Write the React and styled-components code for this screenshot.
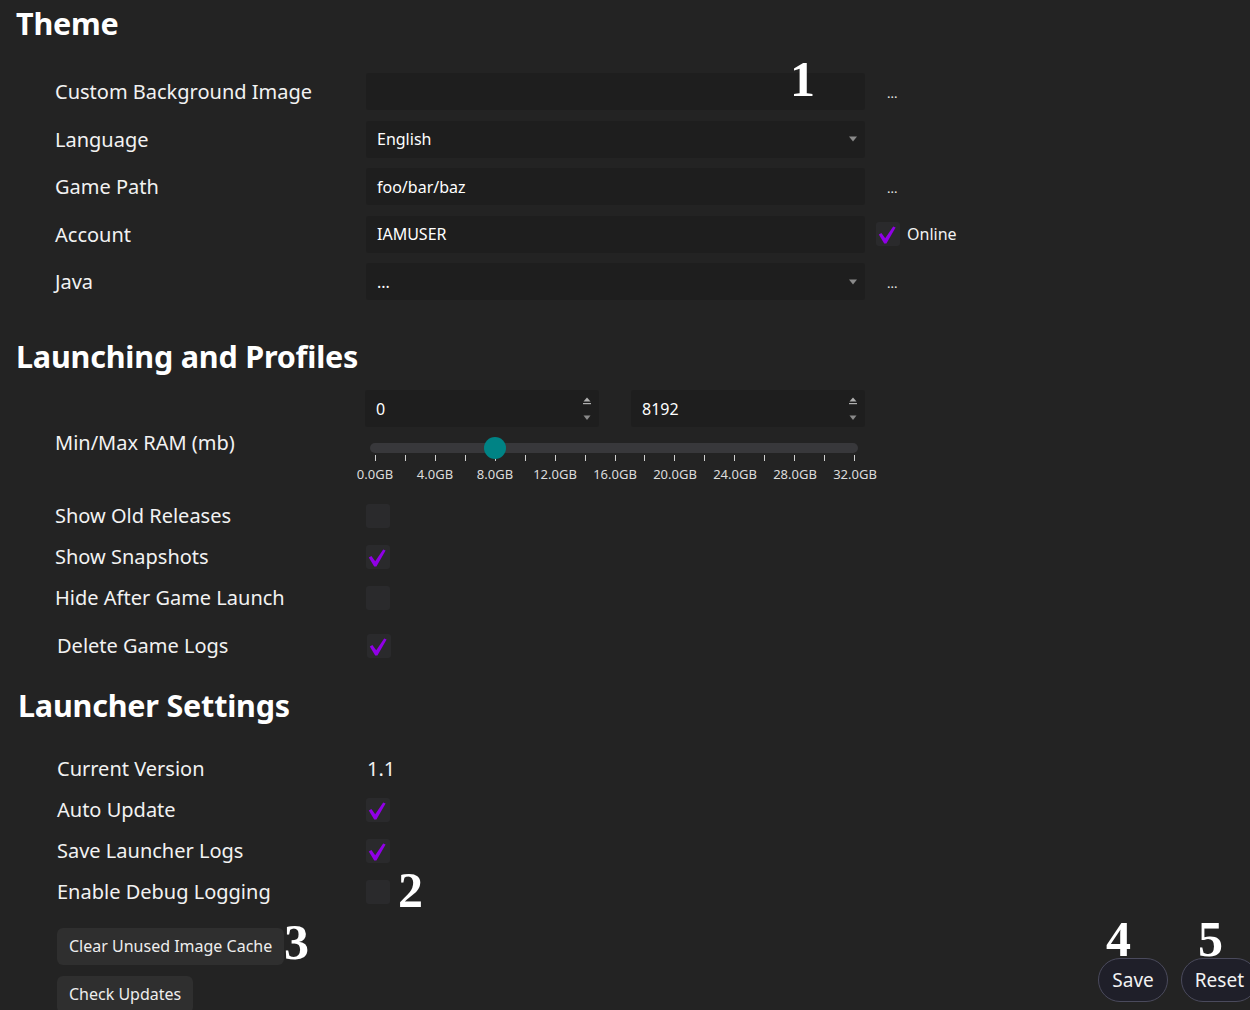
import styled, { createGlobalStyle } from 'styled-components';

const GlobalStyle = createGlobalStyle`
    html, body {
        margin: 0;
        padding: 0;
        background: #232323;
        overflow: hidden;
    }
    body {
        font-family: "Noto Sans", "Open Sans", sans-serif;
        color: #f4f4f4;
    }
`;

const RAM_MAX = 32768;
const ramMin = 0;
const ramMax = 8192;

const themeRows = [
    { label: 'Custom Background Image', kind: 'input', value: '', extra: 'dots' },
    { label: 'Language', kind: 'select', value: 'English' },
    { label: 'Game Path', kind: 'input', value: 'foo/bar/baz', extra: 'dots' },
    { label: 'Account', kind: 'input', value: 'IAMUSER', extra: 'online' },
    { label: 'Java', kind: 'select', value: '...', extra: 'dots' },
];

const profileChecks = [
    { label: 'Show Old Releases', checked: false },
    { label: 'Show Snapshots', checked: true },
    { label: 'Hide After Game Launch', checked: false },
    { label: 'Delete Game Logs', checked: true, shift: true },
];

const launcherChecks = [
    { label: 'Auto Update', checked: true },
    { label: 'Save Launcher Logs', checked: true },
    { label: 'Enable Debug Logging', checked: false },
];

const CheckMark = () => (
    <svg width="24" height="24" viewBox="0 0 24 24">
        <path d="M2.8 12.6 L5.4 10.9 L9.2 16.2 L17.2 4.4 L19.6 5.4 L10.4 21.6 L8.2 21.6 Z" fill="#9000e6" />
    </svg>
);

const Checkbox = ({ checked }) => (
    <Styled.Box>{checked && <CheckMark />}</Styled.Box>
);

const Caret = () => (
    <svg width="10" height="6" viewBox="0 0 10 6">
        <path d="M1 0.5 L9 0.5 L5 5.5 Z" fill="#8a8a8a" />
    </svg>
);

const Spinner = () => (
    <Styled.Spin>
        <svg width="10" height="8" viewBox="0 0 10 8">
            <path d="M1.5 4.5 L8.5 4.5 L5 0.5 Z" fill="#b0b0b0" />
            <rect x="1" y="6" width="8" height="1.2" fill="#b0b0b0" />
        </svg>
        <svg width="10" height="6" viewBox="0 0 10 6">
            <path d="M1.5 0.5 L8.5 0.5 L5 5 Z" fill="#8a8a8a" />
        </svg>
    </Styled.Spin>
);

const RamSlider = () => {
    const ticks = Array.from({ length: 17 });
    const labels = Array.from({ length: 9 }, (_, i) => `${i * 4}.0GB`);
    return (
        <Styled.SliderWrap>
            <Styled.Track>
                <Styled.Rail>
                    <Styled.Thumb style={{ left: `${(ramMax / RAM_MAX) * 100}%` }} />
                </Styled.Rail>
            </Styled.Track>
            <Styled.Ticks>
                {ticks.map((_, i) => (
                    <Styled.Tick key={i} />
                ))}
            </Styled.Ticks>
            <Styled.Ticks>
                {labels.map(l => (
                    <Styled.TickLabel key={l}>
                        <span>{l}</span>
                    </Styled.TickLabel>
                ))}
            </Styled.Ticks>
        </Styled.SliderWrap>
    );
};

const App = () => {
    return (
        <>
            <GlobalStyle />
            <Styled.Page>
                <Styled.H2>Theme</Styled.H2>
                <Styled.FieldList>
                    {themeRows.map(row => (
                        <Styled.FieldRow key={row.label}>
                            <Styled.Label>{row.label}</Styled.Label>
                            <Styled.Field>
                                <span>{row.value}</span>
                                {row.kind === 'select' && <Caret />}
                            </Styled.Field>
                            <Styled.Extra>
                                {row.extra === 'dots' && <Styled.Dots>...</Styled.Dots>}
                                {row.extra === 'online' && (
                                    <>
                                        <Checkbox checked />
                                        <Styled.OnlineText>Online</Styled.OnlineText>
                                    </>
                                )}
                            </Styled.Extra>
                        </Styled.FieldRow>
                    ))}
                </Styled.FieldList>

                <Styled.H2 $top={36}>Launching and Profiles</Styled.H2>
                <Styled.RamRow>
                    <Styled.RamLabel>Min/Max RAM (mb)</Styled.RamLabel>
                    <div>
                        <Styled.NumberPair>
                            <Styled.Field>
                                <span>{ramMin}</span>
                                <Spinner />
                            </Styled.Field>
                            <Styled.Field>
                                <span>{ramMax}</span>
                                <Spinner />
                            </Styled.Field>
                        </Styled.NumberPair>
                        <RamSlider />
                    </div>
                </Styled.RamRow>
                <Styled.CheckList $top={12}>
                    {profileChecks.map(c => (
                        <Styled.CheckRow key={c.label} $shift={c.shift} $tall={c.shift}>
                            <Styled.Label>{c.label}</Styled.Label>
                            <Checkbox checked={c.checked} />
                        </Styled.CheckRow>
                    ))}
                </Styled.CheckList>

                <Styled.H2 $top={19} $shift>Launcher Settings</Styled.H2>
                <Styled.CheckList $top={23}>
                    <Styled.CheckRow $shift>
                        <Styled.Label>Current Version</Styled.Label>
                        <Styled.Version>1.1</Styled.Version>
                    </Styled.CheckRow>
                    {launcherChecks.map(c => (
                        <Styled.CheckRow key={c.label} $shift $boxBack>
                            <Styled.Label>{c.label}</Styled.Label>
                            <Checkbox checked={c.checked} />
                        </Styled.CheckRow>
                    ))}
                </Styled.CheckList>

                <Styled.Bottom>
                    <Styled.ButtonCol>
                        <Styled.Button>Clear Unused Image Cache</Styled.Button>
                        <Styled.Button>Check Updates</Styled.Button>
                    </Styled.ButtonCol>
                    <Styled.Actions>
                        <Styled.Pill>Save</Styled.Pill>
                        <Styled.Pill>Reset</Styled.Pill>
                    </Styled.Actions>
                </Styled.Bottom>

                <Styled.Marker $x={790} $y={54}>1</Styled.Marker>
                <Styled.Marker $x={398} $y={865}>2</Styled.Marker>
                <Styled.Marker $x={284} $y={917}>3</Styled.Marker>
                <Styled.Marker $x={1106} $y={914}>4</Styled.Marker>
                <Styled.Marker $x={1198} $y={914}>5</Styled.Marker>
            </Styled.Page>
        </>
    );
};

export default App;

const Page = styled.div`
    position: relative;
    width: 1250px;
    height: 1010px;
    padding: 3px 0 0 0;
    box-sizing: border-box;
`;

const H2 = styled.h2`
    margin: ${p => p.$top || 0}px 0 0 ${p => (p.$shift ? 18 : 16)}px;
    font-size: 30.5px;
    line-height: 40px;
    font-weight: 700;
    color: #ffffff;
    letter-spacing: -0.2px;
`;

const FieldList = styled.div`
    margin-top: 30px;
    display: flex;
    flex-direction: column;
    gap: 10.5px;
`;

const FieldRow = styled.div`
    display: grid;
    grid-template-columns: 311px 499px 1fr;
    align-items: center;
    padding-left: 55px;
`;

const Label = styled.div`
    font-size: 20px;
    color: #f2f2f2;
    white-space: nowrap;
`;

const RamLabel = styled(Label)`
    padding-top: 11px;
`;

const Field = styled.div`
    height: 37px;
    background: #1e1e1e;
    border-radius: 3px;
    display: flex;
    align-items: center;
    justify-content: space-between;
    padding: 0 7px 0 11px;
    box-sizing: border-box;
    font-size: 16px;
    color: #ffffff;
`;

const Extra = styled.div`
    display: flex;
    align-items: center;
    padding-left: 11px;
    gap: 7px;
`;

const Dots = styled.span`
    padding: 2px 11px 0;
    font-size: 13px;
    color: #e8e8e8;
`;

const OnlineText = styled.span`
    font-size: 16px;
    color: #f2f2f2;
`;

const Box = styled.div`
    width: 24px;
    height: 24px;
    border-radius: 3px;
    background: #2a2a2c;
    display: flex;
    flex-shrink: 0;
`;

const RamRow = styled.div`
    margin-top: 14px;
    display: grid;
    grid-template-columns: 310px 500px;
    align-items: center;
    padding-left: 55px;
`;

const NumberPair = styled.div`
    display: grid;
    grid-template-columns: 1fr 1fr;
    gap: 32px;
`;

const Spin = styled.div`
    display: flex;
    flex-direction: column;
    align-items: center;
    gap: 10px;
`;

const SliderWrap = styled.div`
    margin-top: 16px;
`;

const Track = styled.div`
    margin: 0 7px 0 5px;
    padding: 0 3px 0 5px;
    height: 10px;
    border-radius: 5px;
    background: #38383b;
`;

const Rail = styled.div`
    position: relative;
    height: 100%;
`;

const Thumb = styled.div`
    position: absolute;
    top: 50%;
    width: 22px;
    height: 22px;
    margin: -11px 0 0 -11px;
    border-radius: 50%;
    background: #008385;
`;

const Ticks = styled.div`
    display: flex;
    justify-content: space-between;
    padding: 0 10px;
`;

const Tick = styled.div`
    width: 1px;
    height: 6px;
    margin-top: 2px;
    background: #cfcfcf;
`;

const TickLabel = styled.div`
    width: 0;
    display: flex;
    justify-content: center;
    margin-top: 4px;
    font-size: 13px;
    line-height: 18px;
    color: #dcdcdc;
    white-space: nowrap;
`;

const CheckList = styled.div`
    margin-top: ${p => p.$top || 14}px;
    display: flex;
    flex-direction: column;
`;

const CheckRow = styled.div`
    display: grid;
    grid-template-columns: ${p => (p.$shift ? 310 : 311)}px auto 1fr;
    align-items: center;
    height: ${p => (p.$tall ? 48 : 41)}px;
    padding-top: ${p => (p.$tall ? 7 : 0)}px;
    box-sizing: border-box;
    padding-left: ${p => (p.$shift ? 57 : 55)}px;
    margin-left: ${p => (p.$boxBack ? -1 : 0)}px;
    & > ${Label} {
        padding-left: ${p => (p.$boxBack ? 1 : 0)}px;
    }
`;

const Version = styled.div`
    font-size: 20px;
    color: #f2f2f2;
`;

const Bottom = styled.div`
    margin-top: 15.5px;
    display: flex;
    justify-content: space-between;
    align-items: flex-end;
    padding-left: 57px;
`;

const ButtonCol = styled.div`
    display: flex;
    flex-direction: column;
    align-items: flex-start;
    gap: 11px;
`;

const Button = styled.button`
    height: 37px;
    padding: 0 12px;
    border: none;
    border-radius: 6px;
    background: #2f2f2f;
    color: #ededed;
    font-family: "Noto Sans", "Open Sans", sans-serif;
    font-size: 16px;
`;

const Actions = styled.div`
    display: flex;
    gap: 13px;
    margin-right: -8px;
    padding-bottom: 11px;
`;

const Pill = styled.button`
    height: 44px;
    padding: 0 13px;
    border: 1px solid #4a4a5c;
    border-radius: 22px;
    background: #1f1f29;
    color: #f2f2f2;
    font-family: "Noto Sans", "Open Sans", sans-serif;
    font-size: 19px;
`;

const Marker = styled.div`
    position: absolute;
    left: ${p => p.$x}px;
    top: ${p => p.$y}px;
    font-family: "Liberation Serif", serif;
    font-weight: 700;
    font-size: 50px;
    line-height: 1;
    color: #ffffff;
`;

const Styled = {
    Page,
    H2,
    FieldList,
    FieldRow,
    Label,
    RamLabel,
    Field,
    Extra,
    Dots,
    OnlineText,
    Box,
    RamRow,
    NumberPair,
    Spin,
    SliderWrap,
    Track,
    Rail,
    Thumb,
    Ticks,
    Tick,
    TickLabel,
    CheckList,
    CheckRow,
    Version,
    Bottom,
    ButtonCol,
    Button,
    Actions,
    Pill,
    Marker,
};
